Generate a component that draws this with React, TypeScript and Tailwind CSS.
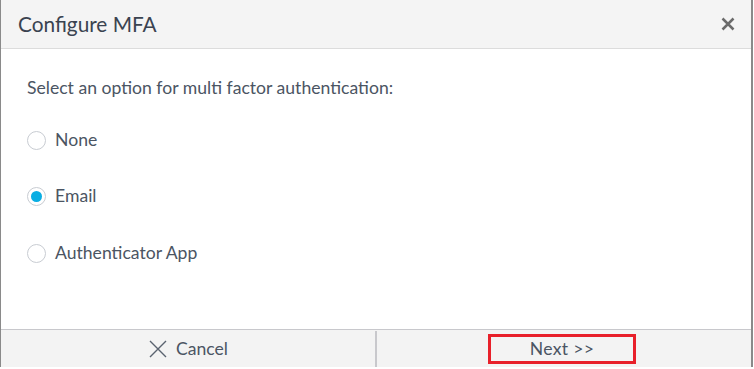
import React, { useState } from "react";

const options = ["None", "Email", "Authenticator App"];

export default function App() {
  const [choice, setChoice] = useState("Email");

  return (
    <div className="h-[369px] w-[754px] bg-white font-['Lato','Open_Sans',sans-serif] text-[#4b5563]">
      <div className="flex h-[367px] w-[753px] flex-col border-l border-r-2 border-[#8a8a8a]">
        <div className="flex h-[49px] items-center justify-between border-b border-[#dcdcdc] bg-[#f4f4f4] pl-[17px] pr-[16px]">
          <h1 className="text-[20.8px] text-[#3a4350]">Configure MFA</h1>
          <svg width="14" height="14" viewBox="0 0 14 14" className="text-[#6b6b6b]">
            <path d="M1.5 1.5 L12.5 12.5 M12.5 1.5 L1.5 12.5" stroke="currentColor" strokeWidth="2.5" />
          </svg>
        </div>

        <div className="flex flex-1 flex-col pl-[26px] pt-[28px]">
          <p className="text-[17.6px] leading-[22px] text-[#4b5563]">
            Select an option for multi factor authentication:
          </p>
          <div className="mt-[30px] flex flex-col gap-[34.5px]">
            {options.map((o) => (
              <label key={o} className="flex h-[22px] cursor-pointer items-center gap-[9px] text-[17.6px]" onClick={() => setChoice(o)}>
                <span className="flex h-[19px] w-[19px] items-center justify-center rounded-full border border-[#c8ccd2] bg-white">
                  {choice === o && <span className="h-[11px] w-[11px] rounded-full bg-[#0aaee3]" />}
                </span>
                <span className="text-[#4b5563]">{o}</span>
              </label>
            ))}
          </div>
        </div>

        <div className="flex h-[38px] border-t border-[#c8c8cc] bg-[#f3f3f3] pt-[1px]">
          <button className="flex w-[376px] items-center justify-center gap-[8px] border-r-2 border-[#c8c8cc] text-[17.6px] text-[#4b5563]">
            <svg width="20" height="20" viewBox="0 0 20 20" className="text-[#5a6370]">
              <path d="M2 2 L18 18 M18 2 L2 18" stroke="currentColor" strokeWidth="1.4" />
            </svg>
            Cancel
          </button>
          <div className="flex flex-1 items-center justify-center">
            <button className="mr-[4px] flex h-[30px] w-[148px] items-center justify-center border-[3px] border-[#e8202a] text-[17.6px] tracking-[0.3px] text-[#4b5563]">
              Next &gt;&gt;
            </button>
          </div>
        </div>
      </div>
    </div>
  );
}
